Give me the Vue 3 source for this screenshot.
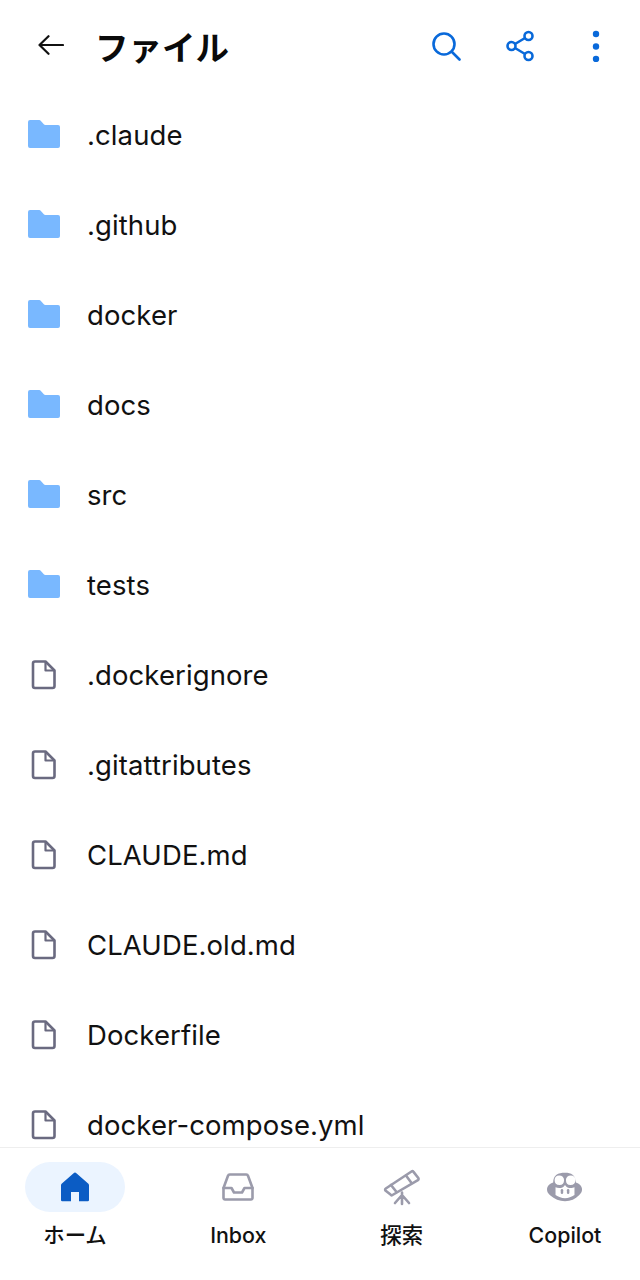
<template>
  <div class="screen">
    <header class="topbar">
      <button class="back" type="button" aria-label="戻る">
        <svg width="26" height="20" viewBox="0 0 26 20" fill="none" stroke="#111" stroke-width="2.2" stroke-linecap="round" stroke-linejoin="round">
          <path d="M1.500 10H25M10.500 1.200 1.500 10l9 8.800" />
        </svg>
      </button>
      <h1>ファイル</h1>
      <div class="actions">
        <svg width="29" height="29" viewBox="0 0 29 29" fill="none" stroke="#0969da" stroke-width="2.600" stroke-linecap="round">
          <circle cx="12" cy="12" r="10.500" />
          <path d="M20 20l7.500 7.500" />
        </svg>
        <svg width="30" height="32" viewBox="0 0 30 32" fill="none" stroke="#0969da" stroke-width="2.600">
          <circle cx="23.500" cy="6" r="4" />
          <circle cx="6.500" cy="16" r="4" />
          <circle cx="23.500" cy="26" r="4" />
          <path d="M10 14 20 8M10 18l10 6" />
        </svg>
        <svg class="dots" width="8" height="32" viewBox="0 0 8 32" fill="#0969da">
          <circle cx="4" cy="4" r="3.200" />
          <circle cx="4" cy="16.500" r="3.200" />
          <circle cx="4" cy="29" r="3.200" />
        </svg>
      </div>
    </header>

    <main class="list">
      <div v-for="item in items" :key="item.name" class="row">
        <svg v-if="item.dir" class="icon" width="32" height="30" viewBox="0 0 32 30">
          <path fill="#79b8ff" d="M0 2a2 2 0 0 1 2-2h9.200a2 2 0 0 1 1.500.7l3.100 3.600a2 2 0 0 0 1.500.7H30a2 2 0 0 1 2 2V26a2 2 0 0 1-2 2H2a2 2 0 0 1-2-2z" />
        </svg>
        <svg v-else class="icon" width="32" height="30" viewBox="0 0 32 30" fill="none" stroke="#6a6a80" stroke-width="2.600" stroke-linejoin="round">
          <path d="M5 3.500a2 2 0 0 1 2-2h10.500L26.500 10.500V26a2 2 0 0 1-2 2H7a2 2 0 0 1-2-2z" />
          <path d="M17.500 1.500V10.500H26.500" stroke-width="2.200" />
        </svg>
        <span>{{ item.name }}</span>
      </div>
    </main>

    <nav class="tabs">
      <div class="tab">
        <div class="tab-icon active">
          <svg width="30" height="30" viewBox="0 0 30 30">
            <path fill="#0b5cc4" d="M13.600 1.200a2 2 0 0 1 2.800 0l12 10.600a2 2 0 0 1 .6 1.500V28a1.200 1.200 0 0 1-1.200 1.200H19V20h-8v9.200H2.200A1.200 1.200 0 0 1 1 28V13.300a2 2 0 0 1 .6-1.500z" />
          </svg>
        </div>
        <span>ホーム</span>
      </div>
      <div class="tab">
        <div class="tab-icon">
          <svg width="32" height="28" viewBox="0 0 32 28" fill="none" stroke="#9b9bab" stroke-width="2.600" stroke-linejoin="round" stroke-linecap="round">
            <path d="M1.500 15 6 2.800a1.800 1.800 0 0 1 1.700-1.300H24.300a1.800 1.800 0 0 1 1.700 1.300L30.500 15V25a1.500 1.500 0 0 1-1.500 1.500H3A1.500 1.500 0 0 1 1.500 25z" />
            <path d="M1.500 15H9.500l2.500 4.500h8l2.500-4.500h8" />
          </svg>
        </div>
        <span>Inbox</span>
      </div>
      <div class="tab">
        <div class="tab-icon">
          <svg width="38" height="38" viewBox="0 0 38 38" fill="none" stroke="#9b9bab" stroke-width="2.600" stroke-linejoin="round" stroke-linecap="round">
            <path d="M2.800 20.500 28.500 3.500a1.500 1.500 0 0 1 2 .4L35.300 10a1.500 1.500 0 0 1-.4 2.100L9.500 27a1.500 1.500 0 0 1-2-.4L2.400 22.600a1.500 1.500 0 0 1 .4-2.100z" />
            <path d="M8 17l5.500 7M23 7.500l5.500 7.500" />
            <path d="M19 24.500V36M19 27l-7 8M19 27l7 8" />
          </svg>
        </div>
        <span>探索</span>
      </div>
      <div class="tab">
        <div class="tab-icon">
          <svg width="36" height="32" viewBox="0 0 38 32">
            <path fill="#9b9bab" fill-rule="evenodd" d="M19 1c3.500 0 6 .6 8 2 2.500 1.700 3.300 4.500 3.500 8.200 3.500 1.300 6.500 3.500 6.500 7.300 0 2.500-1 4.300-3.200 6.200C30 28.800 25 31 19 31S8 28.800 3.200 24.700C1 22.800 0 21 0 18.500c0-3.800 3-6 6.500-7.300C6.700 7.500 7.500 4.700 10 3c2-1.400 5.500-2 9-2zM12.800 3.800c-3 0-4.800 1.800-4.800 4.900 0 3.500 1.800 5.300 5.300 5.300 3.200 0 4.700-1.900 4.700-5.300 0-3.100-2-4.900-5.200-4.900zm12.400 0c-3.200 0-5.200 1.800-5.200 4.900 0 3.400 1.500 5.300 4.700 5.300 3.500 0 5.300-1.800 5.300-5.300 0-3.100-1.800-4.900-4.800-4.900zM19 13.800c-1.500 2.700-3.800 3.200-6 3.200-1.500 0-3-.2-4-.7v8.200c3 2.200 6.500 3.300 10 3.300s7-1.100 10-3.300v-8.200c-1 .5-2.500.7-4 .7-2.200 0-4.500-.5-6-3.200z" />
            <rect x="14.500" y="18" width="2.600" height="5.500" rx="1.300" fill="#9b9bab" />
            <rect x="21" y="18" width="2.600" height="5.500" rx="1.300" fill="#9b9bab" />
          </svg>
        </div>
        <span>Copilot</span>
      </div>
    </nav>
  </div>
</template>

<script setup>
const items = [
  { name: '.claude', dir: true },
  { name: '.github', dir: true },
  { name: 'docker', dir: true },
  { name: 'docs', dir: true },
  { name: 'src', dir: true },
  { name: 'tests', dir: true },
  { name: '.dockerignore' },
  { name: '.gitattributes' },
  { name: 'CLAUDE.md' },
  { name: 'CLAUDE.old.md' },
  { name: 'Dockerfile' },
  { name: 'docker-compose.yml' },
]
</script>

<style>
html,
body {
  margin: 0;
  background: #fff;
}
</style>

<style scoped>
.screen {
  width: 640px;
  height: 1280px;
  display: flex;
  flex-direction: column;
  overflow: hidden;
  background: #fff;
  font-family: Inter, "Noto Sans CJK JP", sans-serif;
  color: #111;
}
.topbar {
  height: 90px;
  flex: none;
  display: flex;
  align-items: center;
  padding: 0 40px 0 38px;
  box-sizing: border-box;
}
.back {
  display: flex;
  padding: 0;
  margin-right: 31px;
  border: none;
  background: none;
}
h1 {
  margin: 0;
  font-family: "Noto Sans CJK JP", sans-serif;
  font-size: 33.500px;
  font-weight: 700;
  color: #0a0a0a;
}
.actions {
  margin-left: auto;
  margin-top: 2px;
  display: flex;
  align-items: center;
  gap: 44px;
}
.dots {
  margin-left: 13px;
}
.list {
  flex: 1;
  min-height: 0;
  overflow: hidden;
}
.row {
  height: 90px;
  display: flex;
  align-items: center;
  gap: 27px;
  padding-left: 28px;
  font-size: 27.500px;
  letter-spacing: 0.1px;
}
.icon {
  flex: none;
}
.tabs {
  height: 133px;
  flex: none;
  box-sizing: border-box;
  border-top: 1px solid #eeeeee;
  padding: 14px 25px 0;
  display: flex;
  justify-content: space-between;
  background: #fff;
}
.tab {
  width: 100px;
  display: flex;
  flex-direction: column;
  align-items: center;
  gap: 10px;
  font-size: 21.400px;
  line-height: 26px;
  font-weight: 500;
  white-space: nowrap;
}
.tab-icon {
  width: 100px;
  height: 50px;
  border-radius: 25px;
  display: flex;
  align-items: center;
  justify-content: center;
}
.tab-icon.active {
  background: #ebf4ff;
}
</style>
